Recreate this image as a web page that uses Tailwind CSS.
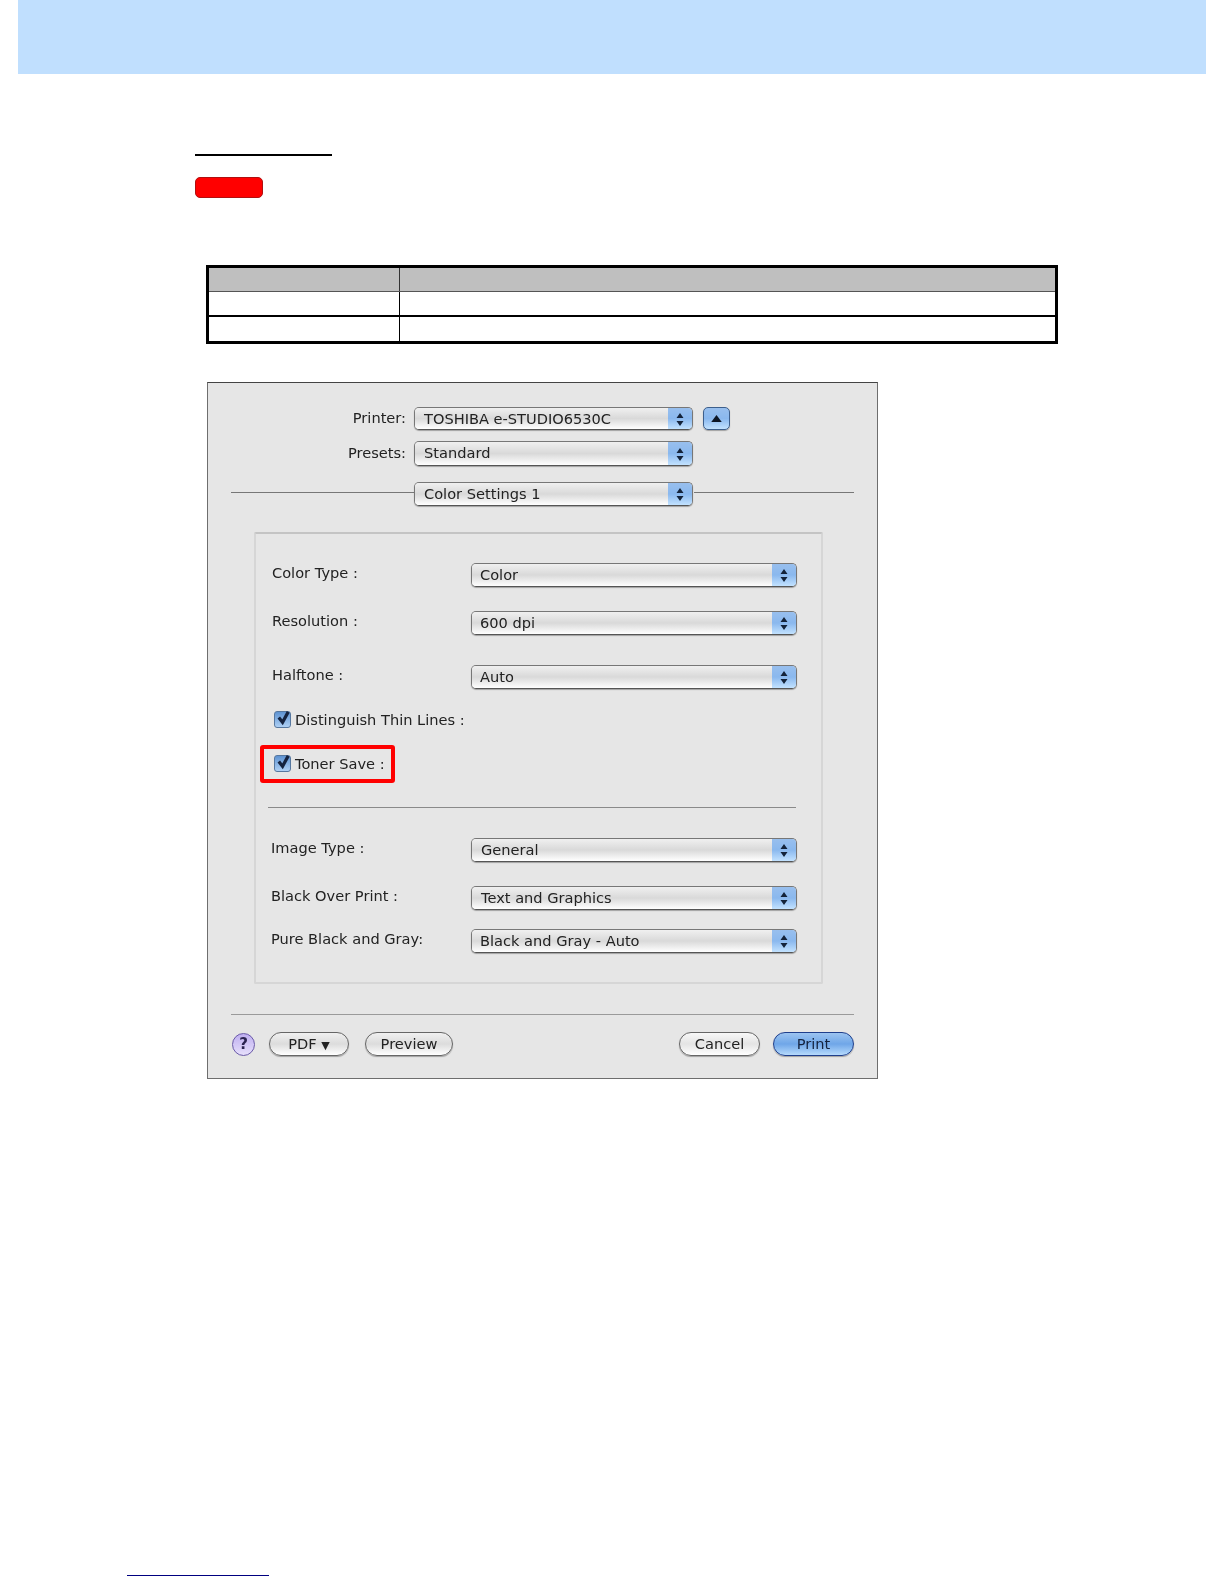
<!DOCTYPE html>
<html lang="en">
<head>
    <meta charset="UTF-8">
    <title>Toner Save</title>
    <script src="https://cdn.jsdelivr.net/npm/@tailwindcss/browser@4"></script>
</head>
<body class="bg-white w-[1224px] h-[1584px] overflow-hidden font-['DejaVu_Sans',sans-serif] text-[14.6px] text-[#222]">

    <svg class="hidden">
        <symbol id="stepper" viewBox="0 0 12 18">
            <path d="M6 3 L9.5 8 H2.5 Z M2.5 11 H9.5 L6 16 Z" fill="#14233a"></path>
        </symbol>
        <symbol id="check" viewBox="0 0 18 18">
            <path d="M4 8 L8 13 L14 2" fill="none" stroke="#15233f" stroke-width="3.4"></path>
        </symbol>
    </svg>

    <header class="ml-[18px] w-[1188px] h-[74px] bg-[#c0dffe]"></header>

    <div class="ml-[195px] mt-[80px] w-[137px] h-[2px] bg-black"></div>
    <div class="ml-[195px] mt-[21px] w-[68px] h-[21px] rounded-[5px] bg-[#ff0000] border border-[#b01010]"></div>

    <!-- empty table -->
    <div class="ml-[206px] mt-[67px] w-[852px] border-[3px] border-black">
        <div class="flex h-[24px] bg-[#bfbfbf] border-b border-[#555]">
            <div class="w-[191px] border-r border-[#333]"></div>
            <div class="flex-1"></div>
        </div>
        <div class="flex h-[25px] border-b-2 border-black">
            <div class="w-[191px] border-r border-black"></div>
            <div class="flex-1"></div>
        </div>
        <div class="flex h-[24px]">
            <div class="w-[191px] border-r border-black"></div>
            <div class="flex-1"></div>
        </div>
    </div>

    <!-- print dialog -->
    <section class="ml-[207px] mt-[38px] w-[671px] h-[697px] bg-[#e6e6e6] border border-[#6e6e6e] border-t-[#444] blur-[0.3px]">
        <div class="flex mt-[24px] h-[23px]">
            <div class="w-[198px] text-right leading-[22px]">Printer:</div>
            <div class="ml-[8px] w-[279px] flex rounded-[5px] border border-[#777] border-b-[#555] shadow-[0_1px_1px_rgba(0,0,0,0.3)] overflow-hidden">
                <div class="flex-1 pl-[9px] leading-[21px] bg-linear-to-b from-[#f0f0f0] via-[#d9d9d9] to-white">TOSHIBA e-STUDIO6530C</div>
                <div class="w-[24px] flex items-center justify-center bg-linear-to-b from-[#98bfee] via-[#8ab8ee] to-[#c2e2ff]"><svg class="w-[12px] h-[18px]"><use href="#stepper"></use></svg></div>
            </div>
            <div class="ml-[10px] w-[27px] flex items-center justify-center rounded-[5px] border border-[#3d5f8c] shadow-[0_1px_1px_rgba(0,0,0,0.3)] bg-linear-to-b from-[#98bfee] via-[#8ab8ee] to-[#c2e2ff]">
                <svg class="w-[11px] h-[7px]" viewBox="0 0 12 8"><path d="M6 0 L12 8 H0 Z" fill="#0c1626"></path></svg>
            </div>
        </div>

        <div class="flex mt-[11px] h-[25px]">
            <div class="w-[198px] text-right leading-[24px]">Presets:</div>
            <div class="ml-[8px] w-[279px] flex rounded-[5px] border border-[#777] border-b-[#555] shadow-[0_1px_1px_rgba(0,0,0,0.3)] overflow-hidden">
                <div class="flex-1 pl-[9px] leading-[22px] bg-linear-to-b from-[#f0f0f0] via-[#d9d9d9] to-white">Standard</div>
                <div class="w-[24px] flex items-center justify-center bg-linear-to-b from-[#98bfee] via-[#8ab8ee] to-[#c2e2ff]"><svg class="w-[12px] h-[18px]"><use href="#stepper"></use></svg></div>
            </div>
        </div>

        <div class="flex mt-[16px] h-[24px] pl-[23px]">
            <div class="w-[183px] h-px mt-[10px] bg-[#777]"></div>
            <div class="w-[279px] flex rounded-[5px] border border-[#777] border-b-[#555] shadow-[0_1px_1px_rgba(0,0,0,0.3)] overflow-hidden">
                <div class="flex-1 pl-[9px] leading-[22px] bg-linear-to-b from-[#f0f0f0] via-[#d9d9d9] to-white">Color Settings 1</div>
                <div class="w-[24px] flex items-center justify-center bg-linear-to-b from-[#98bfee] via-[#8ab8ee] to-[#c2e2ff]"><svg class="w-[12px] h-[18px]"><use href="#stepper"></use></svg></div>
            </div>
            <div class="ml-[1px] w-[160px] h-px mt-[10px] bg-[#777]"></div>
        </div>

        <div class="ml-[46px] mt-[26px] w-[569px] h-[452px] border-2 border-[#d6d6d6] border-t-[#c4c4c4] rounded-[2px] pt-[29px]">
            <div class="flex h-[24px] pl-[16px]">
                <div class="w-[199px] leading-[20px]">Color Type :</div>
                <div class="w-[326px] flex rounded-[5px] border border-[#777] border-b-[#555] shadow-[0_1px_1px_rgba(0,0,0,0.3)] overflow-hidden">
                    <div class="flex-1 pl-[8px] leading-[21px] bg-linear-to-b from-[#f0f0f0] via-[#d9d9d9] to-white">Color</div>
                    <div class="w-[24px] flex items-center justify-center bg-linear-to-b from-[#98bfee] via-[#8ab8ee] to-[#c2e2ff]"><svg class="w-[12px] h-[18px]"><use href="#stepper"></use></svg></div>
                </div>
            </div>
            <div class="flex h-[24px] mt-[24px] pl-[16px]">
                <div class="w-[199px] leading-[20px]">Resolution :</div>
                <div class="w-[326px] flex rounded-[5px] border border-[#777] border-b-[#555] shadow-[0_1px_1px_rgba(0,0,0,0.3)] overflow-hidden">
                    <div class="flex-1 pl-[8px] leading-[21px] bg-linear-to-b from-[#f0f0f0] via-[#d9d9d9] to-white">600 dpi</div>
                    <div class="w-[24px] flex items-center justify-center bg-linear-to-b from-[#98bfee] via-[#8ab8ee] to-[#c2e2ff]"><svg class="w-[12px] h-[18px]"><use href="#stepper"></use></svg></div>
                </div>
            </div>
            <div class="flex h-[24px] mt-[30px] pl-[16px]">
                <div class="w-[199px] leading-[20px]">Halftone :</div>
                <div class="w-[326px] flex rounded-[5px] border border-[#777] border-b-[#555] shadow-[0_1px_1px_rgba(0,0,0,0.3)] overflow-hidden">
                    <div class="flex-1 pl-[8px] leading-[21px] bg-linear-to-b from-[#f0f0f0] via-[#d9d9d9] to-white">Auto</div>
                    <div class="w-[24px] flex items-center justify-center bg-linear-to-b from-[#98bfee] via-[#8ab8ee] to-[#c2e2ff]"><svg class="w-[12px] h-[18px]"><use href="#stepper"></use></svg></div>
                </div>
            </div>

            <div class="flex items-center h-[20px] mt-[21px] pl-[18px]">
                <div class="relative -top-px w-[17px] h-[17px] rounded-[3px] border border-[#56779f] bg-linear-to-b from-[#5e93d2] to-[#aed0f4]">
                    <svg class="absolute left-0 -top-[2px] w-[17px] h-[17px]"><use href="#check"></use></svg>
                </div>
                <span class="ml-[4px]">Distinguish Thin Lines :</span>
            </div>

            <div class="ml-[4px] mt-[15px] w-[135px] h-[38px] flex items-center pl-[10px] border-4 border-[#ff0000] rounded-[3px]">
                <div class="relative -top-px w-[17px] h-[17px] rounded-[3px] border border-[#56779f] bg-linear-to-b from-[#5e93d2] to-[#aed0f4]">
                    <svg class="absolute left-0 -top-[2px] w-[17px] h-[17px]"><use href="#check"></use></svg>
                </div>
                <span class="ml-[4px]">Toner Save :</span>
            </div>

            <div class="ml-[12px] mt-[24px] w-[528px] h-px bg-[#8a8a8a]"></div>

            <div class="flex h-[24px] mt-[30px] pl-[15px]">
                <div class="w-[200px] leading-[20px]">Image Type :</div>
                <div class="w-[326px] flex rounded-[5px] border border-[#777] border-b-[#555] shadow-[0_1px_1px_rgba(0,0,0,0.3)] overflow-hidden">
                    <div class="flex-1 pl-[9px] leading-[21px] bg-linear-to-b from-[#f0f0f0] via-[#d9d9d9] to-white">General</div>
                    <div class="w-[24px] flex items-center justify-center bg-linear-to-b from-[#98bfee] via-[#8ab8ee] to-[#c2e2ff]"><svg class="w-[12px] h-[18px]"><use href="#stepper"></use></svg></div>
                </div>
            </div>
            <div class="flex h-[24px] mt-[24px] pl-[15px]">
                <div class="w-[200px] leading-[20px]">Black Over Print :</div>
                <div class="w-[326px] flex rounded-[5px] border border-[#777] border-b-[#555] shadow-[0_1px_1px_rgba(0,0,0,0.3)] overflow-hidden">
                    <div class="flex-1 pl-[9px] leading-[21px] bg-linear-to-b from-[#f0f0f0] via-[#d9d9d9] to-white">Text and Graphics</div>
                    <div class="w-[24px] flex items-center justify-center bg-linear-to-b from-[#98bfee] via-[#8ab8ee] to-[#c2e2ff]"><svg class="w-[12px] h-[18px]"><use href="#stepper"></use></svg></div>
                </div>
            </div>
            <div class="flex h-[24px] mt-[19px] pl-[15px]">
                <div class="w-[200px] leading-[20px]">Pure Black and Gray:</div>
                <div class="w-[326px] flex rounded-[5px] border border-[#777] border-b-[#555] shadow-[0_1px_1px_rgba(0,0,0,0.3)] overflow-hidden">
                    <div class="flex-1 pl-[8px] leading-[21px] bg-linear-to-b from-[#f0f0f0] via-[#d9d9d9] to-white">Black and Gray - Auto</div>
                    <div class="w-[24px] flex items-center justify-center bg-linear-to-b from-[#98bfee] via-[#8ab8ee] to-[#c2e2ff]"><svg class="w-[12px] h-[18px]"><use href="#stepper"></use></svg></div>
                </div>
            </div>
        </div>

        <div class="ml-[23px] mt-[30px] w-[623px] h-px bg-[#9a9a9a]"></div>

        <div class="flex items-center h-[24px] mt-[17px] pl-[24px] pr-[23px]">
            <div class="w-[23px] h-[23px] rounded-full border border-[#6a5aa8] bg-linear-to-b from-[#bfaff0] to-[#e6dffb] text-center font-bold text-[15px] leading-[21px] text-[#2b2350]">?</div>
            <div class="ml-[14px] w-[80px] h-[24px] rounded-full border border-[#666] shadow-[0_1px_1px_rgba(0,0,0,0.3)] bg-linear-to-b from-[#f0f0f0] via-[#dcdcdc] to-white text-center leading-[22px]">PDF <span class="text-[11px]">▼</span></div>
            <div class="ml-[16px] w-[88px] h-[24px] rounded-full border border-[#666] shadow-[0_1px_1px_rgba(0,0,0,0.3)] bg-linear-to-b from-[#f0f0f0] via-[#dcdcdc] to-white text-center leading-[22px]">Preview</div>
            <div class="ml-auto w-[81px] h-[24px] rounded-full border border-[#666] shadow-[0_1px_1px_rgba(0,0,0,0.3)] bg-linear-to-b from-[#f8f8f8] via-[#e4e4e4] to-white text-center leading-[22px]">Cancel</div>
            <div class="ml-[13px] w-[81px] h-[24px] rounded-full border border-[#1f3f8c] shadow-[0_1px_1px_rgba(0,0,0,0.3)] bg-linear-to-b from-[#9cc4f0] via-[#6fa6e8] to-[#b6dafc] text-center leading-[22px] text-[#14233f]">Print</div>
        </div>
    </section>

    <div class="ml-[127px] mt-[496px] w-[142px] h-px bg-[#000080]"></div>
</body>
</html>
